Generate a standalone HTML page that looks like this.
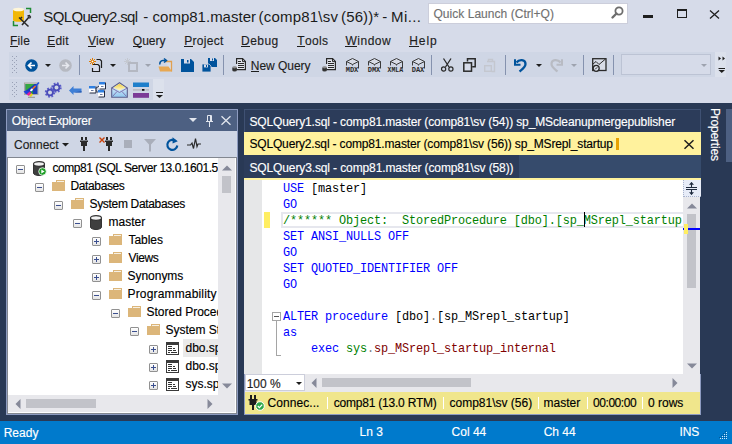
<!DOCTYPE html>
<html><head><meta charset="utf-8">
<style>
*{margin:0;padding:0;box-sizing:border-box}
html,body{width:732px;height:444px;overflow:hidden;background:#D6DBE9;font-family:"Liberation Sans",sans-serif;font-size:12px;color:#1e1e1e}
.a{position:absolute}
.t{position:absolute;white-space:pre;line-height:1;-webkit-text-stroke:0.15px currentColor}
u{text-decoration:none;border-bottom:1px solid currentColor;display:inline-block;line-height:11px;height:11px}
svg{position:absolute;overflow:visible}
.code{position:absolute;left:283px;font-family:"Liberation Mono",monospace;font-size:11.9px;letter-spacing:-0.14px;white-space:pre;line-height:16px;color:#000}
.k{color:#0000FF}.c{color:#008000}.g{color:#808080}.f{color:#800000}
.sep{position:absolute;width:1px;background:#8592AE}
.qs{position:absolute;top:397px;width:1px;height:12px;background:#ffffff}
.eb{position:absolute;width:9px;height:9px;border:1px solid #919191;border-radius:1px;background:linear-gradient(#fff,#e4e4e4)}
.eb:after{content:"";position:absolute;left:1px;top:3px;width:5px;height:1px;background:#3b4f8f}
.ep:before{content:"";position:absolute;left:3px;top:1px;width:1px;height:5px;background:#3b4f8f}
</style></head><body>

<!-- title icon -->
<svg style="left:12px;top:7px" width="20" height="20" viewBox="0 0 20 20">
  <path d="M14 1.5h4.5v4.5M1.5 14v4.5h4.5" stroke="#1E8C34" stroke-width="1.5" fill="none"/>
  <path d="M1 2.5v10.5a5.5 1.8 0 0 0 11 0v-10.5" fill="#F2B705"/>
  <ellipse cx="6.5" cy="2.5" rx="5.5" ry="1.8" fill="#FFF6D8"/>
  <path d="M7 10.5l9.5 9M8 12l2-2" stroke="#2a2a2a" stroke-width="1.5"/>
  <path d="M17.5 9.5l-7.5 8.5" stroke="#2a2a2a" stroke-width="1.6"/>
  <path d="M15.5 9l2 -0.5l1 1.5l-1 1.5" stroke="#2a2a2a" stroke-width="1.3" fill="none"/>
</svg>

<!-- quick launch -->
<div class="a" style="left:428px;top:3px;width:200px;height:21px;background:#fff;border:1px solid #CCCEDB"></div>
<svg style="left:611px;top:6px" width="13" height="13" viewBox="0 0 13 13">
  <circle cx="8" cy="5" r="3.6" stroke="#6d6d6d" stroke-width="1.8" fill="none"/>
  <path d="M5.5 7.5L1.5 11.5" stroke="#6d6d6d" stroke-width="2.4" stroke-linecap="round"/>
</svg>
<!-- window controls -->
<div class="a" style="left:643px;top:15px;width:10px;height:3px;background:#1e1e1e"></div>
<div class="a" style="left:677px;top:9px;width:10px;height:9px;border:1px solid #1e1e1e;border-top-width:2px"></div>
<svg style="left:709px;top:10px" width="11" height="9" viewBox="0 0 11 9">
  <path d="M1 0.5L10 8.5M10 0.5L1 8.5" stroke="#1e1e1e" stroke-width="1.3"/>
</svg>

<!-- toolbars -->
<div class="a" style="left:9px;top:52px;width:717px;height:25px;background:#CFD6E5"></div>
<div class="a" style="left:715px;top:52px;width:11px;height:25px;background:#DCE1EC"></div>
<div class="a" style="left:9px;top:79px;width:144px;height:21px;background:#CFD6E5"></div>
<div class="a" style="left:153px;top:79px;width:11px;height:21px;background:#DCE1EC"></div>


<!-- toolbar 1 icons -->
<svg style="left:12px;top:56px" width="5" height="17" viewBox="0 0 5 17">
 <g fill="#99A1B6"><rect x="0" y="0" width="1" height="1"/><rect x="4" y="0" width="1" height="1"/><rect x="2" y="2" width="1" height="1"/><rect x="0" y="4" width="1" height="1"/><rect x="4" y="4" width="1" height="1"/><rect x="2" y="6" width="1" height="1"/><rect x="0" y="8" width="1" height="1"/><rect x="4" y="8" width="1" height="1"/><rect x="2" y="10" width="1" height="1"/><rect x="0" y="12" width="1" height="1"/><rect x="4" y="12" width="1" height="1"/><rect x="2" y="14" width="1" height="1"/><rect x="0" y="16" width="1" height="1"/><rect x="4" y="16" width="1" height="1"/></g>
</svg>
<svg style="left:25px;top:59px" width="13" height="13" viewBox="0 0 13 13">
 <circle cx="6.5" cy="6.5" r="6.3" fill="#00539C"/>
 <path d="M10 6.5H4M6.5 3.5L3.5 6.5L6.5 9.5" stroke="#fff" stroke-width="1.7" fill="none"/>
</svg>
<svg style="left:45px;top:64px" width="6" height="3" viewBox="0 0 6 3"><path d="M0 0h6L3 3Z" fill="#1e1e1e"/></svg>
<svg style="left:59px;top:59px" width="13" height="13" viewBox="0 0 13 13">
 <circle cx="6.5" cy="6.5" r="6.3" fill="#B6B9C1"/>
 <path d="M3 6.5H9M6.5 3.5L9.5 6.5L6.5 9.5" stroke="#E6E8EE" stroke-width="1.7" fill="none"/>
</svg>
<div class="sep" style="left:79px;top:55px;height:20px"></div>
<svg style="left:89px;top:58px" width="14" height="14" viewBox="0 0 14 14">
 <path d="M3.5 0v7M0 3.5h7M1 1l5 5M6 1l-5 5" stroke="#E07B00" stroke-width="1"/>
 <circle cx="3.5" cy="3.5" r="1.3" fill="#fff" stroke="#E07B00"/>
 <path d="M7.5 1.5h3.5l1.5 1.5v7" stroke="#1e1e1e" stroke-width="1.2" fill="none"/>
 <path d="M4 6.5h5l1.5 1.5v5.5h-7v-3.5" fill="#D6DBE9" stroke="#1e1e1e" stroke-width="1.2"/>
</svg>
<svg style="left:110px;top:64px" width="6" height="3" viewBox="0 0 6 3"><path d="M0 0h6L3 3Z" fill="#1e1e1e"/></svg>
<svg style="left:124px;top:58px" width="14" height="14" viewBox="0 0 14 14">
 <path d="M3.5 0v7M0 3.5h7M1 1l5 5M6 1l-5 5" stroke="#C4C8D0" stroke-width="1"/>
 <rect x="5" y="5" width="8" height="8" fill="none" stroke="#B4B8C2" stroke-width="2"/>
</svg>
<svg style="left:145px;top:64px" width="6" height="3" viewBox="0 0 6 3"><path d="M0 0h6L3 3Z" fill="#9EA3AF"/></svg>
<svg style="left:158px;top:58px" width="15" height="14" viewBox="0 0 15 14">
 <path d="M7 3.5h6.5v10" stroke="#E0A050" stroke-width="1.3" fill="#D8DCE6"/>
 <path d="M0.5 8.5h10l3.5 5h-12Z" fill="#E8A852"/>
 <path d="M2 6.5a3 3 0 0 1 3-4h2.5" stroke="#00539C" stroke-width="1.6" fill="none"/>
 <path d="M6 0.5l2.5 2l-2.5 2" stroke="#00539C" stroke-width="1.5" fill="none"/>
</svg>
<svg style="left:181px;top:59px" width="13" height="13" viewBox="0 0 13 13">
 <path d="M0 0h10l3 3v10h-13Z" fill="#00539C"/>
 <rect x="3" y="0" width="6" height="4.5" fill="#D6DBE9"/>
 <rect x="6" y="1" width="1.5" height="2.5" fill="#00539C"/>
</svg>
<svg style="left:202px;top:57px" width="15" height="15" viewBox="0 0 15 15">
 <path d="M6 1h7l2 2v7h-9Z" fill="#00539C"/>
 <rect x="8" y="1" width="4" height="3" fill="#D6DBE9"/><rect x="10" y="1.5" width="1" height="2" fill="#00539C"/>
 <path d="M0 7h7l2 2v6h-9Z" fill="#00539C" stroke="#CFD6E5" stroke-width="0.8"/>
 <rect x="2" y="7.4" width="4" height="3" fill="#D6DBE9"/><rect x="4" y="8" width="1" height="2" fill="#00539C"/>
</svg>
<div class="sep" style="left:223px;top:55px;height:20px"></div>
<svg style="left:232px;top:58px" width="14" height="14" viewBox="0 0 14 14">
 <path d="M4.6 6V0.6h6l2.8 2.8v8.2H4.6" fill="#E4E7EF" stroke="#2a2a2a" stroke-width="1.2"/>
 <path d="M10.5 0.6v3h3" fill="none" stroke="#2a2a2a" stroke-width="1"/>
 <path d="M6 3.5h3M6 5.5h6M6 7.5h6M6 9.5h6" stroke="#2a2a2a" stroke-width="1.1"/>
 <path d="M0.3 9.4v2.8a2.3 1.2 0 0 0 4.6 0v-2.8" fill="#333"/><ellipse cx="2.6" cy="9.3" rx="2.3" ry="1.1" fill="#888"/>
</svg>
<svg style="left:322px;top:58px" width="14" height="14" viewBox="0 0 14 14">
 <path d="M4.6 6V0.6h6l2.8 2.8v8.2H4.6" fill="#E4E7EF" stroke="#2a2a2a" stroke-width="1.2"/>
 <path d="M10.5 0.6v3h3" fill="none" stroke="#2a2a2a" stroke-width="1"/>
 <path d="M6 3.5h3M6 5.5h6M6 7.5h6M6 9.5h6" stroke="#2a2a2a" stroke-width="1.1"/>
 <path d="M0.3 9.4v2.8a2.3 1.2 0 0 0 4.6 0v-2.8" fill="#333"/><ellipse cx="2.6" cy="9.3" rx="2.3" ry="1.1" fill="#888"/>
</svg>
<svg style="left:344px;top:57px" width="16" height="16" viewBox="0 0 16 16">
 <path d="M2.5 4.5L8.5 1.5L14.5 4.5L8.5 7.5Z" fill="#D8DCE6" stroke="#3a3a3a" stroke-width="1"/>
 <path d="M2.5 4.5v4M14.5 4.5v7M8.5 7.5v1" stroke="#3a3a3a" stroke-width="1"/>
 <text x="1.70" y="15" font-family="Liberation Mono" font-weight="bold" font-size="7" fill="#2a2a2a" textLength="12.6" lengthAdjust="spacingAndGlyphs">MDX</text>
</svg><svg style="left:366px;top:57px" width="16" height="16" viewBox="0 0 16 16">
 <path d="M2.5 4.5L8.5 1.5L14.5 4.5L8.5 7.5Z" fill="#D8DCE6" stroke="#3a3a3a" stroke-width="1"/>
 <path d="M2.5 4.5v4M14.5 4.5v7M8.5 7.5v1" stroke="#3a3a3a" stroke-width="1"/>
 <text x="1.70" y="15" font-family="Liberation Mono" font-weight="bold" font-size="7" fill="#2a2a2a" textLength="12.6" lengthAdjust="spacingAndGlyphs">DMX</text>
</svg><svg style="left:388px;top:57px" width="16" height="16" viewBox="0 0 16 16">
 <path d="M2.5 4.5L8.5 1.5L14.5 4.5L8.5 7.5Z" fill="#D8DCE6" stroke="#3a3a3a" stroke-width="1"/>
 <path d="M2.5 4.5v4M14.5 4.5v7M8.5 7.5v1" stroke="#3a3a3a" stroke-width="1"/>
 <text x="-0.40" y="15" font-family="Liberation Mono" font-weight="bold" font-size="7" fill="#2a2a2a" textLength="15.5" lengthAdjust="spacingAndGlyphs">XMLA</text>
</svg><svg style="left:410px;top:57px" width="16" height="16" viewBox="0 0 16 16">
 <path d="M2.5 4.5L8.5 1.5L14.5 4.5L8.5 7.5Z" fill="#D8DCE6" stroke="#3a3a3a" stroke-width="1"/>
 <path d="M2.5 4.5v4M14.5 4.5v7M8.5 7.5v1" stroke="#3a3a3a" stroke-width="1"/>
 <text x="1.70" y="15" font-family="Liberation Mono" font-weight="bold" font-size="7" fill="#2a2a2a" textLength="12.6" lengthAdjust="spacingAndGlyphs">DAX</text>
</svg>
<div class="sep" style="left:431px;top:55px;height:20px"></div>
<svg style="left:441px;top:58px" width="13" height="14" viewBox="0 0 13 14">
 <path d="M2.5 0.5L8 9M10 0.5L4.5 9" stroke="#2a2a2a" stroke-width="1.3"/>
 <circle cx="2.6" cy="11" r="2.1" fill="none" stroke="#2a2a2a" stroke-width="1.2"/>
 <circle cx="9.9" cy="11" r="2.1" fill="none" stroke="#2a2a2a" stroke-width="1.2"/>
</svg>
<svg style="left:463px;top:58px" width="13" height="14" viewBox="0 0 13 14">
 <path d="M4.5 3.5V0.8h7.7v8h-3" fill="none" stroke="#2a2a2a" stroke-width="1.5"/>
 <rect x="0.8" y="4.8" width="7.7" height="8.4" fill="#D6DBE9" stroke="#2a2a2a" stroke-width="1.5"/>
</svg>
<svg style="left:484px;top:58px" width="13" height="14" viewBox="0 0 13 14">
 <path d="M3 3.5h7.5v10h-3" fill="none" stroke="#C4C7CF" stroke-width="1.4"/>
 <path d="M4.5 3.5v-2h4v2" fill="none" stroke="#C4C7CF" stroke-width="1.4"/>
 <rect x="0.7" y="7.7" width="6.6" height="5.6" fill="none" stroke="#C4C7CF" stroke-width="1.4"/>
</svg>
<div class="sep" style="left:505px;top:55px;height:20px"></div>
<svg style="left:514px;top:58px" width="14" height="14" viewBox="0 0 14 14">
 <path d="M2.5 4.5C5 1 11.5 1 11.5 6c0 3-3 5-6 7.5" stroke="#00539C" stroke-width="2.3" fill="none"/>
 <path d="M1 1.2v5.5h5.5" stroke="#00539C" stroke-width="2" fill="none"/>
</svg>
<svg style="left:536px;top:64px" width="6" height="3" viewBox="0 0 6 3"><path d="M0 0h6L3 3Z" fill="#1e1e1e"/></svg>
<svg style="left:550px;top:58px" width="13" height="14" viewBox="0 0 13 14">
 <path d="M10.5 4.5C8 1 1.5 1 1.5 6c0 3 3 5 6 7.5" stroke="#B8BBC3" stroke-width="2.2" fill="none"/>
 <path d="M12 1.2v5.5H6.5" stroke="#B8BBC3" stroke-width="2" fill="none"/>
</svg>
<svg style="left:571px;top:64px" width="6" height="3" viewBox="0 0 6 3"><path d="M0 0h6L3 3Z" fill="#9EA3AF"/></svg>
<div class="sep" style="left:583px;top:55px;height:20px"></div>
<svg style="left:592px;top:58px" width="15" height="14" viewBox="0 0 15 14">
 <rect x="0.7" y="0.7" width="13.3" height="11.8" fill="#D8DCE6" stroke="#2a2a2a" stroke-width="1.3"/>
 <path d="M1 6l3-2.5l3 3l6.5-5.5" stroke="#2a2a2a" stroke-width="1" fill="none"/>
 <circle cx="4.2" cy="10.3" r="3" fill="#D8DCE6" stroke="#2a2a2a" stroke-width="1.3"/>
 <path d="M3.2 11.3l2-2" stroke="#2a2a2a" stroke-width="1"/>
</svg>
<div class="sep" style="left:613px;top:55px;height:20px"></div>
<div class="a" style="left:621px;top:54px;width:90px;height:21px;background:#D6DBE9;border:1px solid #BCC3D4"></div>
<svg style="left:701px;top:64px" width="6" height="3" viewBox="0 0 6 3"><path d="M0 0h6L3 3Z" fill="#9EA3AF"/></svg>
<svg style="left:718px;top:56px" width="8" height="18" viewBox="0 0 8 18">
 <path d="M0.5 0.5l2.5 2l-2.5 2ZM4.5 0.5l2.5 2l-2.5 2Z" fill="#1e1e1e"/>
 <path d="M0.5 12.5h6.5" stroke="#1e1e1e" stroke-width="1"/><path d="M0.5 14h6.5l-3.25 3Z" fill="#1e1e1e"/>
</svg>

<!-- toolbar 2 icons -->
<svg style="left:12px;top:82px" width="5" height="15" viewBox="0 0 5 15">
 <g fill="#99A1B6"><rect x="0" y="0" width="1" height="1"/><rect x="4" y="0" width="1" height="1"/><rect x="2" y="2" width="1" height="1"/><rect x="0" y="4" width="1" height="1"/><rect x="4" y="4" width="1" height="1"/><rect x="2" y="6" width="1" height="1"/><rect x="0" y="8" width="1" height="1"/><rect x="4" y="8" width="1" height="1"/><rect x="2" y="10" width="1" height="1"/><rect x="0" y="12" width="1" height="1"/><rect x="4" y="12" width="1" height="1"/><rect x="2" y="14" width="1" height="1"/></g>
</svg>
<svg style="left:23px;top:82px" width="17" height="16" viewBox="0 0 17 16">
 <rect x="1.5" y="1" width="13.5" height="11.5" fill="#D0D0C8" stroke="#A8A8A0" stroke-width="1"/>
 <path d="M2.5 2h12v10h-12Z" fill="#1B3CB8"/>
 <path d="M2.5 2h9L2.5 9Z" fill="#35A840"/>
 <path d="M16 0.5L8 8.5" stroke="#2050E0" stroke-width="1.6"/>
 <path d="M12.5 4L9.5 7" stroke="#F07020" stroke-width="1.6"/>
 <path d="M9.5 7L7.5 9" stroke="#FFFFFF" stroke-width="1.8"/>
 <path d="M0.5 9.5L3 8.5L6.5 9.5L3.5 12.5Z" fill="#2040E0"/>
 <path d="M3.5 12.5L6.5 9.5L8.5 11L6 14Z" fill="#E020A0"/>
 <path d="M6 14L8.5 11L10 12.5L8 15Z" fill="#E8D020"/>
 <path d="M7.5 10L9.5 9L10 12Z" fill="#20B020"/>
 <path d="M5 15.3h7" stroke="#909090" stroke-width="1"/>
</svg>
<svg style="left:45px;top:83px" width="17" height="15" viewBox="0 0 17 15">
 <circle cx="5" cy="9.5" r="3.9" fill="none" stroke="#5A5CC8" stroke-width="2.6" stroke-dasharray="1.6 1.46"/>
 <circle cx="5" cy="9.5" r="2.9" fill="none" stroke="#4A4CB8" stroke-width="1.8"/>
 <circle cx="11.5" cy="4.5" r="3.9" fill="none" stroke="#5A5CC8" stroke-width="2.6" stroke-dasharray="1.6 1.46"/>
 <circle cx="11.5" cy="4.5" r="2.9" fill="none" stroke="#4A4CB8" stroke-width="1.8"/>
</svg>
<svg style="left:69px;top:86px" width="13" height="9" viewBox="0 0 13 9">
 <path d="M0 4.5L4.5 0v2.5h8v4h-8V9Z" fill="#3E7FD6"/>
 <path d="M4.5 6.5h8v-1.5" fill="#2A5BB0"/>
</svg>
<svg style="left:89px;top:82px" width="17" height="16" viewBox="0 0 17 16">
 <path d="M6 7l4-3M6 7.5l3.5 3.5" stroke="#2a3550" stroke-width="1" fill="none"/>
 <rect x="0" y="4" width="6.5" height="7" fill="#fff"/><rect x="0" y="4" width="6.5" height="2.5" fill="#2F7FE0"/><path d="M0.5 11h6.5v-6.5" stroke="#222a40" stroke-width="1" fill="none"/><rect x="2" y="8" width="2.5" height="1" fill="#6a7aa0"/>
 <rect x="10" y="0" width="6" height="7" fill="#fff"/><rect x="10" y="0" width="6" height="2.5" fill="#2F7FE0"/><path d="M10.5 7h6v-6.5" stroke="#222a40" stroke-width="1" fill="none"/><rect x="12" y="4" width="2.5" height="1" fill="#6a7aa0"/>
 <rect x="9" y="8" width="6" height="7" fill="#fff"/><rect x="9" y="8" width="6" height="2.5" fill="#2F7FE0"/><path d="M9.5 15h6v-6.5" stroke="#222a40" stroke-width="1" fill="none"/><rect x="11" y="12" width="2.5" height="1" fill="#6a7aa0"/>
</svg>
<svg style="left:111px;top:82px" width="17" height="16" viewBox="0 0 17 16">
 <defs><linearGradient id="eg" x1="0" y1="0" x2="0" y2="1"><stop offset="0" stop-color="#F2F4FA"/><stop offset="1" stop-color="#8FC8F0"/></linearGradient>
 <linearGradient id="fg" x1="0" y1="0" x2="0" y2="1"><stop offset="0" stop-color="#F0D040"/><stop offset="1" stop-color="#FFF8D0"/></linearGradient></defs>
 <path d="M0.7 6L8.5 0.7L16.3 6v9.3H0.7Z" fill="url(#eg)" stroke="#5C5F8A" stroke-width="1.1"/>
 <path d="M2.5 5.5L8.5 1.8L14.5 5.5L8.5 8.5Z" fill="url(#fg)"/>
 <path d="M0.7 6L8.5 10.5L16.3 6M1.5 14.5L6 9.5M15.5 14.5L11 9.5" stroke="#7A6CA8" stroke-width="0.9" fill="none"/>
</svg>
<svg style="left:133px;top:82px" width="16" height="16" viewBox="0 0 16 16">
 <rect x="0" y="0.5" width="16" height="4.5" fill="#1E7FCB"/>
 <rect x="0" y="7" width="9" height="1.8" fill="#B9BDC6"/><rect x="9" y="7" width="2.5" height="1.8" fill="#111"/><rect x="12.5" y="7" width="3.5" height="1.8" fill="#B9BDC6"/>
 <rect x="0" y="11" width="16" height="4.8" fill="#7B3A96"/>
</svg>
<svg style="left:156px;top:92px" width="7" height="6" viewBox="0 0 7 6"><rect x="0" y="0" width="7" height="1" fill="#1e1e1e"/><path d="M0 3h7L3.5 6Z" fill="#1e1e1e"/></svg>

<!-- dark env -->
<div class="a" style="left:0;top:103px;width:732px;height:318px;background:#293955"></div>

<!-- Object explorer frame -->
<div class="a" style="left:6px;top:109px;width:232px;height:306px;background:#8D9BC0"></div>
<div class="a" style="left:7px;top:110px;width:230px;height:21px;background:#4D6082"></div>
<div class="a" style="left:7px;top:131px;width:230px;height:26px;background:#CFD6E5"></div>
<div class="a" style="left:7px;top:157px;width:230px;height:257px;background:#fff;border:1px solid #828790"></div>
<!-- selected row -->
<div class="a" style="left:183px;top:339px;width:35px;height:18px;background:#EAEAEA"></div>


<!-- OE title icons -->
<svg style="left:189px;top:118px" width="8" height="4" viewBox="0 0 8 4"><path d="M0 0h8L4 4Z" fill="#E2E6EE"/></svg>
<svg style="left:206px;top:115px" width="7" height="12" viewBox="0 0 7 12">
 <path d="M1.5 0.5h4v6h-4Z" fill="none" stroke="#E2E6EE" stroke-width="1"/>
 <path d="M4.5 0.5v6" stroke="#E2E6EE" stroke-width="1"/>
 <path d="M0 6.5h7M3.5 6.5V12" stroke="#E2E6EE" stroke-width="1"/>
</svg>
<svg style="left:221px;top:116px" width="10" height="9" viewBox="0 0 10 9">
 <path d="M0.5 0.3L9.5 8.7M9.5 0.3L0.5 8.7" stroke="#E2E6EE" stroke-width="1.3"/>
</svg>
<!-- OE toolbar icons -->
<svg style="left:62px;top:143px" width="7" height="4" viewBox="0 0 7 4"><path d="M0 0h7L3.5 3.5Z" fill="#1e1e1e"/></svg>
<svg style="left:80px;top:137px" width="9" height="15" viewBox="0 0 9 15">
 <g fill="#2a2a2a"><rect x="1" y="0" width="2" height="3"/><rect x="5" y="0" width="2" height="3"/><rect x="0" y="3.5" width="8" height="1.5"/><rect x="1" y="4" width="6" height="5"/><rect x="3" y="9" width="2" height="5"/></g>
</svg>
<svg style="left:99px;top:137px" width="7" height="7" viewBox="0 0 7 7"><path d="M0.5 0.5L5.5 5.5M5.5 0.5L0.5 5.5" stroke="#C8400A" stroke-width="1.4"/></svg>
<svg style="left:105px;top:137px" width="9" height="15" viewBox="0 0 9 15">
 <g fill="#2a2a2a"><rect x="1" y="0" width="2" height="3"/><rect x="5" y="0" width="2" height="3"/><rect x="0" y="3.5" width="8" height="1.5"/><rect x="1" y="4" width="6" height="5"/><rect x="3" y="9" width="2" height="5"/></g>
</svg>
<div class="a" style="left:124px;top:140px;width:8px;height:8px;background:#A9AEBA"></div>
<svg style="left:144px;top:139px" width="12" height="13" viewBox="0 0 12 13"><path d="M0 0h12L7 5.5V12.5H5V5.5Z" fill="#A9AEBA"/></svg>
<svg style="left:166px;top:137px" width="13" height="15" viewBox="0 0 13 15">
 <path d="M9.8 4.3A5 5 0 1 0 11.3 8.5" stroke="#00539C" stroke-width="2.2" fill="none"/>
 <path d="M6.5 0.3L11.8 4.2L6.6 6.5Z" fill="#00539C"/>
</svg>
<svg style="left:187px;top:138px" width="14" height="12" viewBox="0 0 14 12">
 <path d="M0 7h3.5l1.5-2l1.5 5.5l2-10l1.5 8l1-2.5h3" stroke="#2a2a2a" stroke-width="1.2" fill="none"/>
</svg>

<!-- doc tabs -->
<div class="a" style="left:244px;top:109px;width:457px;height:23px;background:#2C3C5A;border:1px solid #3F5173;border-bottom:0"></div>
<div class="a" style="left:244px;top:132px;width:457px;height:23px;background:#FFF29D"></div>
<div class="a" style="left:244px;top:155px;width:457px;height:23px;background:#364B6C"></div>
<div class="a" style="left:244px;top:155px;width:275px;height:23px;background:#2C3C5A"></div>
<div class="a" style="left:244px;top:178px;width:457px;height:2px;background:#FFF29D"></div>


<div class="a" style="left:616px;top:138px;width:3px;height:12px;background:#E8A200"></div>
<svg style="left:684px;top:140px" width="10" height="9" viewBox="0 0 10 9"><path d="M0.5 0.3L9.5 8.7M9.5 0.3L0.5 8.7" stroke="#1e1e1e" stroke-width="1.5"/></svg>

<!-- editor -->
<div class="a" style="left:244px;top:180px;width:456px;height:194px;background:#fff"></div>
<div class="a" style="left:244px;top:374px;width:457px;height:41px;background:#8D9BC0"></div>
<div class="a" style="left:244px;top:180px;width:18px;height:194px;background:#E6E7E8"></div>
<div class="a" style="left:264px;top:212px;width:6px;height:16px;background:#FFEE62"></div>
<div class="a" style="left:281px;top:212px;width:402px;height:16px;border:2px solid #E6E7EE;border-right:0"></div>


<div class="a" style="left:272px;top:312px;width:9px;height:9px;border:1px solid #A5A5A5;background:#fff"></div>
<div class="a" style="left:274px;top:316px;width:5px;height:1px;background:#555"></div>
<div class="a" style="left:276px;top:321px;width:1px;height:35px;background:#A5A5A5"></div>
<div class="a" style="left:276px;top:355px;width:5px;height:1px;background:#A5A5A5"></div>
<div class="code" style="top:181px"><span class="k">USE</span> [master]
<span class="k">GO</span>
<span class="c">/****** Object:  StoredProcedure [dbo].[sp_MSrepl_startup</span>
<span class="k">SET</span> <span class="k">ANSI_NULLS</span> <span class="k">OFF</span>
<span class="k">GO</span>
<span class="k">SET</span> <span class="k">QUOTED_IDENTIFIER</span> <span class="k">OFF</span>
<span class="k">GO</span>

<span class="k">ALTER</span> <span class="k">procedure</span> [dbo]<span class="g">.</span>[sp_MSrepl_startup]
<span class="k">as</span>
    <span class="k">exec</span> <span class="c">sys</span><span class="g">.</span><span class="f">sp_MSrepl_startup_internal</span></div>


<div class="a" style="left:584px;top:212px;width:1px;height:15px;background:#000"></div>
<div class="eb" style="left:16px;top:165px"></div>
<svg style="left:33px;top:161px" width="13" height="15" viewBox="0 0 13 15"><path d="M0.5 3v9a5.5 2.5 0 0 0 11 0v-9" fill="#3f3f3f" stroke="#333" stroke-width="1"/><ellipse cx="6" cy="3" rx="5.5" ry="2.3" fill="#f2f2f2" stroke="#333" stroke-width="1.2"/><circle cx="9.5" cy="10.5" r="3.8" fill="#1F9E28" stroke="#fff" stroke-width="0.8"/><path d="M8.3 8.6L11.6 10.5L8.3 12.4Z" fill="#fff"/></svg>
<div class="eb" style="left:35px;top:183px"></div>
<div class="a" style="left:56px;top:180px;width:9px;height:2px;background:#DCB67A"></div><div class="a" style="left:57px;top:181px;width:7px;height:1px;background:#F6F0E4"></div><div class="a" style="left:52px;top:182px;width:13px;height:9px;background:#DCB67A"></div>
<div class="eb" style="left:54px;top:201px"></div>
<div class="a" style="left:75px;top:198px;width:9px;height:2px;background:#DCB67A"></div><div class="a" style="left:76px;top:199px;width:7px;height:1px;background:#F6F0E4"></div><div class="a" style="left:71px;top:200px;width:13px;height:9px;background:#DCB67A"></div>
<div class="eb" style="left:73px;top:219px"></div>
<svg style="left:90px;top:215px" width="13" height="15" viewBox="0 0 13 15"><path d="M0.5 3v9a5.5 2.5 0 0 0 11 0v-9" fill="#3f3f3f" stroke="#333" stroke-width="1"/><ellipse cx="6" cy="3" rx="5.5" ry="2.3" fill="#f2f2f2" stroke="#333" stroke-width="1.2"/></svg>
<div class="eb ep" style="left:92px;top:237px"></div>
<div class="a" style="left:113px;top:234px;width:9px;height:2px;background:#DCB67A"></div><div class="a" style="left:114px;top:235px;width:7px;height:1px;background:#F6F0E4"></div><div class="a" style="left:109px;top:236px;width:13px;height:9px;background:#DCB67A"></div>
<div class="eb ep" style="left:92px;top:255px"></div>
<div class="a" style="left:113px;top:252px;width:9px;height:2px;background:#DCB67A"></div><div class="a" style="left:114px;top:253px;width:7px;height:1px;background:#F6F0E4"></div><div class="a" style="left:109px;top:254px;width:13px;height:9px;background:#DCB67A"></div>
<div class="eb ep" style="left:92px;top:273px"></div>
<div class="a" style="left:113px;top:270px;width:9px;height:2px;background:#DCB67A"></div><div class="a" style="left:114px;top:271px;width:7px;height:1px;background:#F6F0E4"></div><div class="a" style="left:109px;top:272px;width:13px;height:9px;background:#DCB67A"></div>
<div class="eb" style="left:92px;top:291px"></div>
<div class="a" style="left:113px;top:288px;width:9px;height:2px;background:#DCB67A"></div><div class="a" style="left:114px;top:289px;width:7px;height:1px;background:#F6F0E4"></div><div class="a" style="left:109px;top:290px;width:13px;height:9px;background:#DCB67A"></div>
<div class="eb" style="left:111px;top:309px"></div>
<div class="a" style="left:132px;top:306px;width:9px;height:2px;background:#DCB67A"></div><div class="a" style="left:133px;top:307px;width:7px;height:1px;background:#F6F0E4"></div><div class="a" style="left:128px;top:308px;width:13px;height:9px;background:#DCB67A"></div>
<div class="eb" style="left:130px;top:327px"></div>
<div class="a" style="left:151px;top:324px;width:9px;height:2px;background:#DCB67A"></div><div class="a" style="left:152px;top:325px;width:7px;height:1px;background:#F6F0E4"></div><div class="a" style="left:147px;top:326px;width:13px;height:9px;background:#DCB67A"></div>
<div class="eb ep" style="left:149px;top:345px"></div>
<div class="a" style="left:166px;top:342px;width:13px;height:13px;border:1px solid #3a3a3a;border-top-width:3px;background:#fff"></div><svg style="left:166px;top:342px" width="13" height="13" viewBox="0 0 13 13"><path d="M2 4.5h4M2 6.5h4M7 6.5h2M2 8.5h4M7 8.5h3M2 10.5h2M5 10.5h6" stroke="#333" stroke-width="1"/></svg>
<div class="eb ep" style="left:149px;top:363px"></div>
<div class="a" style="left:166px;top:360px;width:13px;height:13px;border:1px solid #3a3a3a;border-top-width:3px;background:#fff"></div><svg style="left:166px;top:360px" width="13" height="13" viewBox="0 0 13 13"><path d="M2 4.5h4M2 6.5h4M7 6.5h2M2 8.5h4M7 8.5h3M2 10.5h2M5 10.5h6" stroke="#333" stroke-width="1"/></svg>
<div class="eb ep" style="left:149px;top:381px"></div>
<div class="a" style="left:166px;top:378px;width:13px;height:13px;border:1px solid #3a3a3a;border-top-width:3px;background:#fff"></div><svg style="left:166px;top:378px" width="13" height="13" viewBox="0 0 13 13"><path d="M2 4.5h4M2 6.5h4M7 6.5h2M2 8.5h4M7 8.5h3M2 10.5h2M5 10.5h6" stroke="#333" stroke-width="1"/></svg>
<div class="a" style="left:0;top:0;width:218px;height:395px;overflow:hidden"><div class="t tr" style="left:52.50px;top:162px;font-size:12px;color:#000;letter-spacing:-0.459px">comp81 (SQL Server 13.0.1601.5</div>
<div class="t tr" style="left:70.50px;top:180px;font-size:12px;color:#000;letter-spacing:-0.375px">Databases</div>
<div class="t tr" style="left:89.50px;top:198px;font-size:12px;color:#000;letter-spacing:-0.327px">System Databases</div>
<div class="t tr" style="left:108.50px;top:216px;font-size:12px;color:#000;letter-spacing:0.020px">master</div>
<div class="t tr" style="left:128.50px;top:234px;font-size:12px;color:#000;letter-spacing:-0.040px">Tables</div>
<div class="t tr" style="left:128.50px;top:252px;font-size:12px;color:#000;letter-spacing:-0.375px">Views</div>
<div class="t tr" style="left:127.50px;top:270px;font-size:12px;color:#000;letter-spacing:-0.029px">Synonyms</div>
<div class="t tr" style="left:127.50px;top:288px;font-size:12px;color:#000;letter-spacing:0.164px">Programmability</div>
<div class="t tr" style="left:146.50px;top:306px;font-size:12px;color:#000;letter-spacing:0.000px">Stored Procedures</div>
<div class="t tr" style="left:165.50px;top:324px;font-size:12px;color:#000;letter-spacing:0.000px">System Stored Procedures</div>
<div class="t tr" style="left:185.50px;top:342px;font-size:12px;color:#000;letter-spacing:0.000px">dbo.sp_MScleanupmergepublisher</div>
<div class="t tr" style="left:185.50px;top:360px;font-size:12px;color:#000;letter-spacing:0.000px">dbo.sp_MSrepl_startup</div>
<div class="t tr" style="left:185.50px;top:378px;font-size:12px;color:#000;letter-spacing:0.000px">sys.sp_MSrepl_startup</div></div>
<!-- OE tree scrollbars -->
<div class="a" style="left:218px;top:158px;width:17px;height:237px;background:#E8E8EC"></div>
<svg style="left:222px;top:165px" width="10" height="6" viewBox="0 0 10 6"><path d="M0 5.5L5 0.5L10 5.5Z" fill="#868999"/></svg>
<div class="a" style="left:222px;top:176px;width:9px;height:17px;background:#C2C3C9"></div>
<svg style="left:222px;top:383px" width="10" height="6" viewBox="0 0 10 6"><path d="M0 0.5L5 5.5L10 0.5Z" fill="#868999"/></svg>
<div class="a" style="left:8px;top:395px;width:227px;height:17px;background:#E8E8EC"></div>
<svg style="left:15px;top:399px" width="6" height="10" viewBox="0 0 6 10"><path d="M5.5 0L0.5 5L5.5 10Z" fill="#868999"/></svg>
<div class="a" style="left:26px;top:399px;width:70px;height:9px;background:#C2C3C9"></div>
<svg style="left:207px;top:399px" width="6" height="10" viewBox="0 0 6 10"><path d="M0.5 0L5.5 5L0.5 10Z" fill="#868999"/></svg>

<!-- editor scrollbars -->
<div class="a" style="left:683px;top:180px;width:17px;height:195px;background:#E8E8EC"></div>
<div class="a" style="left:683px;top:180px;width:18px;height:17px;background:#E7ECF8;border-left:1px dotted #A9B3CC;border-bottom:1px dotted #A9B3CC"></div>
<svg style="left:683px;top:180px" width="17" height="17" viewBox="0 0 17 17">
 <path d="M3 7.5h11M3 9.5h11M8.5 2.5v4.5M8.5 10v4.5" stroke="#1e2a3e" stroke-width="1.1"/>
 <path d="M6 4.8L8.5 2L11 4.8ZM6 12.2L8.5 15L11 12.2Z" fill="#1e2a3e"/>
</svg>
<svg style="left:687px;top:203px" width="10" height="6" viewBox="0 0 10 6"><path d="M0 5.5L5 0.5L10 5.5Z" fill="#868999"/></svg>
<div class="a" style="left:687px;top:214px;width:9px;height:74px;background:#C2C3C9"></div>
<div class="a" style="left:683px;top:228px;width:17px;height:2px;background:#0000FF"></div>
<div class="a" style="left:684px;top:224px;width:4px;height:10px;background:#FFEE62"></div>
<svg style="left:687px;top:363px" width="10" height="6" viewBox="0 0 10 6"><path d="M0 0.5L5 5.5L10 0.5Z" fill="#868999"/></svg>
<div class="a" style="left:245px;top:374px;width:455px;height:18px;background:#E8E8EC"></div>
<div class="a" style="left:245px;top:374px;width:60px;height:17px;background:#fff;border:1px solid #CCCEDB"></div>
<svg style="left:296px;top:382px" width="6" height="3" viewBox="0 0 6 3"><path d="M0 0h6L3 3Z" fill="#1e1e1e"/></svg>
<svg style="left:311px;top:378px" width="6" height="10" viewBox="0 0 6 10"><path d="M5.5 0L0.5 5L5.5 10Z" fill="#868999"/></svg>
<div class="a" style="left:322px;top:378px;width:149px;height:9px;background:#C2C3C9"></div>
<svg style="left:672px;top:378px" width="6" height="10" viewBox="0 0 6 10"><path d="M0.5 0L5.5 5L0.5 10Z" fill="#868999"/></svg>

<!-- status bar -->
<div class="a" style="left:0;top:421px;width:732px;height:23px;background:#007ACC"></div>

<svg style="left:719px;top:431px" width="9" height="9" viewBox="0 0 9 9"><rect x="7" y="1" width="1" height="1" fill="#D2E8F8"/><rect x="6" y="0" width="1" height="1" fill="#005C9E"/><rect x="5" y="3" width="1" height="1" fill="#D2E8F8"/><rect x="4" y="2" width="1" height="1" fill="#005C9E"/><rect x="7" y="3" width="1" height="1" fill="#D2E8F8"/><rect x="6" y="2" width="1" height="1" fill="#005C9E"/><rect x="3" y="5" width="1" height="1" fill="#D2E8F8"/><rect x="2" y="4" width="1" height="1" fill="#005C9E"/><rect x="5" y="5" width="1" height="1" fill="#D2E8F8"/><rect x="4" y="4" width="1" height="1" fill="#005C9E"/><rect x="7" y="5" width="1" height="1" fill="#D2E8F8"/><rect x="6" y="4" width="1" height="1" fill="#005C9E"/><rect x="1" y="7" width="1" height="1" fill="#D2E8F8"/><rect x="0" y="6" width="1" height="1" fill="#005C9E"/><rect x="3" y="7" width="1" height="1" fill="#D2E8F8"/><rect x="2" y="6" width="1" height="1" fill="#005C9E"/><rect x="5" y="7" width="1" height="1" fill="#D2E8F8"/><rect x="4" y="6" width="1" height="1" fill="#005C9E"/><rect x="7" y="7" width="1" height="1" fill="#D2E8F8"/><rect x="6" y="6" width="1" height="1" fill="#005C9E"/></svg>
<!-- properties -->
<div class="a" style="left:726px;top:109px;width:6px;height:53px;background:#4D6082"></div>
<div class="t" style="left:705px;top:108px;color:#fff;letter-spacing:-0.2px;transform-origin:0 0;transform:translate(16px,0) rotate(90deg)">Properties</div>

<!-- query status bar -->
<div class="a" style="left:245px;top:392px;width:455px;height:22px;background:#F0E68C"></div>
<svg style="left:248px;top:395px" width="17" height="16" viewBox="0 0 17 16">
 <g fill="#1e1e1e"><rect x="2" y="0" width="2" height="4"/><rect x="6" y="0" width="2" height="4"/><rect x="0.5" y="4" width="9" height="1.5"/><rect x="1.5" y="5" width="7" height="5"/><rect x="4" y="10" width="2" height="5"/></g>
 <circle cx="12" cy="11" r="4.3" fill="#2DA84A" stroke="#fff" stroke-width="1"/>
 <path d="M9.8 11l1.6 1.6l2.8-3" stroke="#fff" stroke-width="1.3" fill="none"/>
</svg>
<div class="qs" style="left:327px"></div>
<div class="qs" style="left:443px"></div>
<div class="qs" style="left:538px"></div>
<div class="qs" style="left:587px"></div>
<div class="qs" style="left:642px"></div>
<div class="t" style="left:43.30px;top:9px;font-size:15px;color:#1b1b1b;letter-spacing:-0.642px;-webkit-text-stroke:0">SQLQuery2.sql</div>
<div class="t" style="left:143.20px;top:9px;font-size:15px;color:#1b1b1b;letter-spacing:0.000px;-webkit-text-stroke:0">-</div>
<div class="t" style="left:152.60px;top:9px;font-size:15px;color:#1b1b1b;letter-spacing:0.000px;-webkit-text-stroke:0">comp81.master</div>
<div class="t" style="left:258.60px;top:9px;font-size:15px;color:#1b1b1b;letter-spacing:0.200px;-webkit-text-stroke:0">(comp81\sv</div>
<div class="t" style="left:341.10px;top:9px;font-size:15px;color:#1b1b1b;letter-spacing:0.100px;-webkit-text-stroke:0">(56))*</div>
<div class="t" style="left:382.20px;top:9px;font-size:15px;color:#1b1b1b;letter-spacing:0.000px;-webkit-text-stroke:0">-</div>
<div class="t" style="left:391.00px;top:9px;font-size:15px;color:#1b1b1b;letter-spacing:0.425px;-webkit-text-stroke:0">Mi...</div>
<div class="t" style="left:433.40px;top:8px;font-size:12px;color:#717171;letter-spacing:0.045px">Quick Launch (Ctrl+Q)</div>
<div class="t" style="left:10.00px;top:35px;font-size:12px;color:#1e1e1e;letter-spacing:0.167px"><u>F</u>ile</div>
<div class="t" style="left:47.20px;top:35px;font-size:12px;color:#1e1e1e;letter-spacing:0.233px"><u>E</u>dit</div>
<div class="t" style="left:87.90px;top:35px;font-size:12px;color:#1e1e1e;letter-spacing:0.067px"><u>V</u>iew</div>
<div class="t" style="left:132.80px;top:35px;font-size:12px;color:#1e1e1e;letter-spacing:0.025px"><u>Q</u>uery</div>
<div class="t" style="left:184.20px;top:35px;font-size:12px;color:#1e1e1e;letter-spacing:0.300px"><u>P</u>roject</div>
<div class="t" style="left:241.10px;top:35px;font-size:12px;color:#1e1e1e;letter-spacing:0.450px"><u>D</u>ebug</div>
<div class="t" style="left:297.20px;top:35px;font-size:12px;color:#1e1e1e;letter-spacing:0.375px"><u>T</u>ools</div>
<div class="t" style="left:345.40px;top:35px;font-size:12px;color:#1e1e1e;letter-spacing:0.520px"><u>W</u>indow</div>
<div class="t" style="left:409.30px;top:35px;font-size:12px;color:#1e1e1e;letter-spacing:0.867px"><u>H</u>elp</div>
<div class="t" style="left:250.80px;top:60px;font-size:12px;color:#1e1e1e;letter-spacing:-0.038px"><u>N</u>ew Query</div>
<div class="t" style="left:11.80px;top:115px;font-size:12px;color:#ffffff;letter-spacing:-0.193px">Object Explorer</div>
<div class="t" style="left:14.00px;top:139px;font-size:12px;color:#1e1e1e;letter-spacing:0.000px">Connect</div>
<div class="t" style="left:249.40px;top:116px;font-size:12px;color:#ffffff;letter-spacing:-0.126px">SQLQuery1.sql - comp81.master (comp81\sv (54)) sp_MScleanupmergepublisher</div>
<div class="t" style="left:249.40px;top:138px;font-size:12px;color:#000000;letter-spacing:-0.156px">SQLQuery2.sql - comp81.master (comp81\sv (56)) sp_MSrepl_startup</div>
<div class="t" style="left:249.40px;top:162px;font-size:12px;color:#ffffff;letter-spacing:-0.118px">SQLQuery3.sql - comp81.master (comp81\sv (58))</div>
<div class="t" style="left:246.70px;top:378px;font-size:12px;color:#1e1e1e;letter-spacing:0.000px">100 %</div>
<div class="t" style="left:267.60px;top:397px;font-size:12px;color:#000;letter-spacing:0.050px">Connec...</div>
<div class="t" style="left:333.70px;top:397px;font-size:12px;color:#000;letter-spacing:-0.212px">comp81 (13.0 RTM)</div>
<div class="t" style="left:449.50px;top:397px;font-size:12px;color:#000;letter-spacing:0.000px">comp81\sv (56)</div>
<div class="t" style="left:543.60px;top:397px;font-size:12px;color:#000;letter-spacing:0.000px">master</div>
<div class="t" style="left:593.10px;top:397px;font-size:12px;color:#000;letter-spacing:-0.457px">00:00:00</div>
<div class="t" style="left:648.00px;top:397px;font-size:12px;color:#000;letter-spacing:0.000px">0 rows</div>
<div class="t" style="left:3.70px;top:427px;font-size:12px;color:#ffffff;letter-spacing:0.000px">Ready</div>
<div class="t" style="left:359.50px;top:426px;font-size:12px;color:#ffffff;letter-spacing:0.000px">Ln 3</div>
<div class="t" style="left:451.60px;top:426px;font-size:12px;color:#ffffff;letter-spacing:0.000px">Col 44</div>
<div class="t" style="left:543.70px;top:426px;font-size:12px;color:#ffffff;letter-spacing:0.000px">Ch 44</div>
<div class="t" style="left:679.40px;top:426px;font-size:12px;color:#ffffff;letter-spacing:-0.050px">INS</div>


</body></html>
